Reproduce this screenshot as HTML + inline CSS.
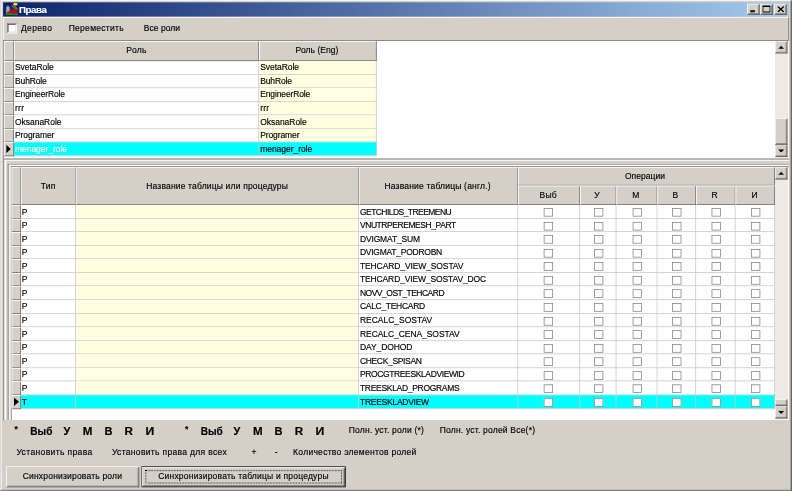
<!DOCTYPE html>
<html><head><meta charset="utf-8"><title>Права</title>
<style>
html,body{margin:0;padding:0;background:#d4d0c8;overflow:hidden;}
body{width:792px;height:491px;position:relative;}
#w{position:absolute;left:0;top:0;width:1024px;height:635px;transform-origin:0 0;transform:scale(0.773438);background:#d4d0c8;font-family:"Liberation Sans", sans-serif;font-size:11px;color:#000;overflow:hidden;filter:blur(0.35px);}
#w div,#w span{position:absolute;box-sizing:border-box;white-space:nowrap;}
.t{line-height:14px;height:14px;-webkit-text-stroke:0.2px currentColor;}
.hd{background:#d4d0c8;border-right:1px solid #6c6c6c;border-bottom:1px solid #6c6c6c;border-top:1px solid #fff;border-left:1px solid #fff;text-align:center;}
.cb{border:1px solid #848484;background:#fff;}
.sunk{border:1px solid;border-color:#808080 #fff #fff #808080;}
.sunk2{border:1px solid;border-color:#404040 #d4d0c8 #d4d0c8 #404040;}
.btn{background:#d4d0c8;border:1px solid;border-color:#fff #404040 #404040 #fff;}
.btn:after{content:"";position:absolute;left:0;top:0;right:0;bottom:0;border:1px solid;border-color:#d4d0c8 #808080 #808080 #d4d0c8;}
.sb{background:#eceae6;}
.hl{background:#c8c8c8;height:1px;}
.vl{background:#c8c8c8;width:1px;}
</style></head><body><div id="w">
<div class="" style="left:0px;top:0px;width:1024px;height:635px;border:1px solid;border-color:#d4d0c8 #404040 #404040 #d4d0c8;"></div>
<div class="" style="left:1px;top:0px;width:1022px;height:634px;border:1px solid;border-color:#fff #808080 #a09d98 #fff;"></div>
<div class="" style="left:4px;top:3px;width:1016px;height:18px;background:linear-gradient(to right,#0a246a 0%,#a6caf0 100%);"></div>
<div class="" style="left:4px;top:21px;width:1016px;height:1px;opacity:0.55;background:linear-gradient(to right,#0a246a 0%,#a6caf0 100%);"></div>
<svg style="position:absolute;left:7px;top:4px" width="16" height="16" viewBox="0 0 16 16"><rect x="0" y="0" width="16" height="16" fill="#0c2078"/><rect x="0" y="0" width="7" height="4" fill="#101850"/><path d="M1.8 3.6h2.6l1 2v7.6h-4.4v-7.6z" fill="#acacac"/><rect x="1.6" y="3" width="3" height="1.6" fill="#606060"/><ellipse cx="13" cy="1.4" rx="3" ry="1.6" fill="#f4f400"/><path d="M7 3l1.4 0 6.8 5.5h-2.2z" fill="#8c8c28"/><path d="M9.6 2.6l1.2 0 5 4.4v1.5z" fill="#a8a820"/><path d="M5.6 9l2-3 1 0-2 4z" fill="#2840b8"/><path d="M2.2 13.5v-2.2l3.4-0.7 2-1.2 1.6-1.6h1.2l0.8 0.8 0.8-0.8h1l0.8 0.8 0.8-0.8h1.4v5.7z" fill="#c40010"/><rect x="0" y="13.3" width="16" height="2.4" fill="#109410"/></svg>
<span class="t" style="left:24.5px;top:5.5px;color:#fff;letter-spacing:-0.493px;font-size:12.5px;font-weight:bold;">Права</span>
<div class="btn" style="left:966px;top:5px;width:16px;height:14px;"></div>
<div class="" style="left:970px;top:13px;width:6px;height:3px;background:#000;opacity:0.85;"></div>
<div class="btn" style="left:983px;top:5px;width:16px;height:14px;"></div>
<div class="" style="left:986px;top:7px;width:10px;height:9px;border:1px solid #000;border-top:2px solid #000;"></div>
<div class="btn" style="left:1001px;top:5px;width:16px;height:14px;"></div>
<svg style="position:absolute;left:1004.5px;top:7.5px" width="9" height="8" viewBox="0 0 9 8"><path d="M0.6 0.4L8.4 7.6M8.4 0.4L0.6 7.6" stroke="#000" stroke-width="1.7" fill="none"/></svg>
<div class="" style="left:4px;top:22px;width:1016px;height:30px;border:1px solid;border-color:#fff #808080 transparent #fff;"></div>
<div class="" style="left:9px;top:30px;width:13px;height:13px;border:1px solid;border-color:#808080 #fff #fff #808080;background:#fff;"></div>
<div class="" style="left:10px;top:31px;width:11px;height:11px;border:1px solid;border-color:#404040 #d4d0c8 #d4d0c8 #404040;"></div>
<span class="t" style="left:27px;top:29px;letter-spacing:0.488px;">Дерево</span>
<span class="t" style="left:88.8px;top:29px;letter-spacing:0.372px;">Переместить</span>
<span class="t" style="left:186px;top:29px;letter-spacing:0.015px;">Все роли</span>
<div class="" style="left:4px;top:52px;width:1016px;height:153px;background:#fff;border-top:1px solid #6c6c6c;border-left:1px solid #6c6c6c;"></div>
<div class="hd" style="left:5px;top:53px;width:13px;height:26px;"></div>
<div class="hd" style="left:18px;top:53px;width:317px;height:26px;"></div>
<span class="t" style="left:163.3px;top:58px;letter-spacing:0.412px;">Роль</span>
<div class="hd" style="left:335px;top:53px;width:152px;height:26px;"></div>
<span class="t" style="left:382.1px;top:58px;letter-spacing:0.070px;">Роль (Eng)</span>
<div class="hd" style="left:5px;top:79px;width:13px;height:17.5px;"></div>
<div class="" style="left:335px;top:79px;width:152px;height:16.5px;background:#ffffe1;"></div>
<div class="hl" style="left:18px;top:95.5px;width:469px;height:1px;"></div>
<div class="vl" style="left:334px;top:79px;width:1px;height:17.5px;"></div>
<div class="vl" style="left:486px;top:79px;width:1px;height:17.5px;"></div>
<span class="t" style="left:19.4px;top:80px;letter-spacing:-0.073px;">SvetaRole</span>
<span class="t" style="left:336.4px;top:80px;letter-spacing:-0.073px;">SvetaRole</span>
<div class="hd" style="left:5px;top:96.5px;width:13px;height:17.5px;"></div>
<div class="" style="left:335px;top:96.5px;width:152px;height:16.5px;background:#ffffe1;"></div>
<div class="hl" style="left:18px;top:113px;width:469px;height:1px;"></div>
<div class="vl" style="left:334px;top:96.5px;width:1px;height:17.5px;"></div>
<div class="vl" style="left:486px;top:96.5px;width:1px;height:17.5px;"></div>
<span class="t" style="left:19.4px;top:97.5px;letter-spacing:-0.180px;">BuhRole</span>
<span class="t" style="left:336.4px;top:97.5px;letter-spacing:-0.180px;">BuhRole</span>
<div class="hd" style="left:5px;top:114px;width:13px;height:17.5px;"></div>
<div class="" style="left:335px;top:114px;width:152px;height:16.5px;background:#ffffe1;"></div>
<div class="hl" style="left:18px;top:130.5px;width:469px;height:1px;"></div>
<div class="vl" style="left:334px;top:114px;width:1px;height:17.5px;"></div>
<div class="vl" style="left:486px;top:114px;width:1px;height:17.5px;"></div>
<span class="t" style="left:19.4px;top:115px;letter-spacing:-0.171px;">EngineerRole</span>
<span class="t" style="left:336.4px;top:115px;letter-spacing:-0.171px;">EngineerRole</span>
<div class="hd" style="left:5px;top:131.5px;width:13px;height:17.5px;"></div>
<div class="" style="left:335px;top:131.5px;width:152px;height:16.5px;background:#ffffe1;"></div>
<div class="hl" style="left:18px;top:148px;width:469px;height:1px;"></div>
<div class="vl" style="left:334px;top:131.5px;width:1px;height:17.5px;"></div>
<div class="vl" style="left:486px;top:131.5px;width:1px;height:17.5px;"></div>
<span class="t" style="left:19.4px;top:132.5px;letter-spacing:0.324px;">rrr</span>
<span class="t" style="left:336.4px;top:132.5px;letter-spacing:0.324px;">rrr</span>
<div class="hd" style="left:5px;top:149px;width:13px;height:17.5px;"></div>
<div class="" style="left:335px;top:149px;width:152px;height:16.5px;background:#ffffe1;"></div>
<div class="hl" style="left:18px;top:165.5px;width:469px;height:1px;"></div>
<div class="vl" style="left:334px;top:149px;width:1px;height:17.5px;"></div>
<div class="vl" style="left:486px;top:149px;width:1px;height:17.5px;"></div>
<span class="t" style="left:19.4px;top:150px;letter-spacing:-0.045px;">OksanaRole</span>
<span class="t" style="left:336.4px;top:150px;letter-spacing:-0.045px;">OksanaRole</span>
<div class="hd" style="left:5px;top:166.5px;width:13px;height:17.5px;"></div>
<div class="" style="left:335px;top:166.5px;width:152px;height:16.5px;background:#ffffe1;"></div>
<div class="hl" style="left:18px;top:183px;width:469px;height:1px;"></div>
<div class="vl" style="left:334px;top:166.5px;width:1px;height:17.5px;"></div>
<div class="vl" style="left:486px;top:166.5px;width:1px;height:17.5px;"></div>
<span class="t" style="left:19.4px;top:167.5px;letter-spacing:-0.127px;">Programer</span>
<span class="t" style="left:336.4px;top:167.5px;letter-spacing:-0.127px;">Programer</span>
<div class="hd" style="left:5px;top:184px;width:13px;height:17.5px;"></div>
<div class="" style="left:18px;top:184px;width:469px;height:16.5px;background:#00ffff;"></div>
<svg style="position:absolute;left:8px;top:187px" width="6" height="11" viewBox="0 0 6 11"><path d="M0 0l6 5.5-6 5.5z" fill="#000"/></svg>
<div class="hl" style="left:18px;top:200.5px;width:469px;height:1px;"></div>
<div class="vl" style="left:334px;top:184px;width:1px;height:17.5px;"></div>
<div class="vl" style="left:486px;top:184px;width:1px;height:17.5px;"></div>
<span class="t" style="left:19.4px;top:185px;color:#fff;letter-spacing:-0.058px;">menager_role</span>
<span class="t" style="left:336.4px;top:185px;letter-spacing:-0.058px;">menager_role</span>
<div class="sb" style="left:1002px;top:53px;width:17px;height:151px;"></div>
<div class="btn" style="left:1002px;top:53px;width:16px;height:16px;"></div>
<svg style="position:absolute;left:1005.5px;top:58.5px" width="8" height="4.5" viewBox="0 0 8 4.5"><path d="M0 4.5l4-4.5 4 4.5z" fill="#000"/></svg>
<div class="btn" style="left:1002px;top:187px;width:16px;height:16px;"></div>
<svg style="position:absolute;left:1005.5px;top:192.5px" width="8" height="4.5" viewBox="0 0 8 4.5"><path d="M0 0l4 4.5 4-4.5z" fill="#000"/></svg>
<div class="btn" style="left:1002px;top:153px;width:16px;height:34px;"></div>
<div class="" style="left:4px;top:205px;width:1016px;height:339px;border-top:1px solid #808080;border-left:1px solid #808080;"></div>
<div class="" style="left:6px;top:207px;width:1014px;height:336px;border-top:1px solid #fff;border-left:2px solid #fff;"></div>
<div class="" style="left:10px;top:212px;width:1010px;height:331px;border-top:1px solid #808080;border-left:1px solid #808080;"></div>
<div class="" style="left:12px;top:213px;width:1008px;height:330px;border-top:2px solid #fff;border-left:2px solid #fff;"></div>
<div class="" style="left:14px;top:215px;width:1006px;height:328px;background:#fff;border-top:1px solid #6c6c6c;border-left:1px solid #6c6c6c;"></div>
<div class="hd" style="left:15px;top:216px;width:12px;height:49px;"></div>
<div class="hd" style="left:27px;top:216px;width:71px;height:49px;"></div>
<div class="hd" style="left:98px;top:216px;width:366px;height:49px;"></div>
<div class="hd" style="left:464px;top:216px;width:206px;height:49px;"></div>
<div class="hd" style="left:670px;top:216px;width:332px;height:24px;"></div>
<span class="t" style="left:52.8px;top:233px;letter-spacing:0.140px;">Тип</span>
<span class="t" style="left:189px;top:233px;letter-spacing:0.224px;">Название таблицы или процедуры</span>
<span class="t" style="left:497.1px;top:233px;letter-spacing:0.241px;">Название таблицы (англ.)</span>
<span class="t" style="left:808px;top:221px;letter-spacing:0.037px;">Операции</span>
<div class="hd" style="left:670px;top:240px;width:80px;height:25px;"></div>
<span class="t" style="left:697.7px;top:245px;letter-spacing:0.218px;">Выб</span>
<div class="hd" style="left:750px;top:240px;width:47px;height:25px;"></div>
<span class="t" style="left:768.4px;top:245px;letter-spacing:-0.006px;">У</span>
<div class="hd" style="left:797px;top:240px;width:53px;height:25px;"></div>
<span class="t" style="left:817.4px;top:245px;letter-spacing:-0.112px;">М</span>
<div class="hd" style="left:850px;top:240px;width:50px;height:25px;"></div>
<span class="t" style="left:869.6px;top:245px;letter-spacing:-0.097px;">В</span>
<div class="hd" style="left:900px;top:240px;width:51px;height:25px;"></div>
<span class="t" style="left:920px;top:245px;letter-spacing:-0.186px;">R</span>
<div class="hd" style="left:951px;top:240px;width:51px;height:25px;"></div>
<span class="t" style="left:971.6px;top:245px;letter-spacing:-0.149px;">И</span>
<div class="hd" style="left:15px;top:265px;width:12px;height:17.57px;"></div>
<div class="" style="left:98px;top:265px;width:366px;height:16.57px;background:#ffffe1;"></div>
<div class="hl" style="left:27px;top:281.57px;width:975px;height:1px;"></div>
<div class="vl" style="left:97px;top:265px;width:1px;height:17.57px;"></div>
<div class="vl" style="left:463px;top:265px;width:1px;height:17.57px;"></div>
<div class="vl" style="left:669px;top:265px;width:1px;height:17.57px;"></div>
<div class="vl" style="left:749px;top:265px;width:1px;height:17.57px;"></div>
<div class="vl" style="left:796px;top:265px;width:1px;height:17.57px;"></div>
<div class="vl" style="left:849px;top:265px;width:1px;height:17.57px;"></div>
<div class="vl" style="left:899px;top:265px;width:1px;height:17.57px;"></div>
<div class="vl" style="left:950px;top:265px;width:1px;height:17.57px;"></div>
<div class="vl" style="left:1001px;top:265px;width:1px;height:17.57px;"></div>
<span class="t" style="left:28.2px;top:266.5px;">P</span>
<span class="t" style="left:465.4px;top:266.5px;letter-spacing:-0.720px;">GETCHILDS_TREEMENU</span>
<div class="cb" style="left:703px;top:269px;width:12px;height:11px;"></div>
<div class="cb" style="left:768px;top:269px;width:12px;height:11px;"></div>
<div class="cb" style="left:818px;top:269px;width:12px;height:11px;"></div>
<div class="cb" style="left:869px;top:269px;width:12px;height:11px;"></div>
<div class="cb" style="left:920px;top:269px;width:12px;height:11px;"></div>
<div class="cb" style="left:971px;top:269px;width:12px;height:11px;"></div>
<div class="hd" style="left:15px;top:282.57px;width:12px;height:17.57px;"></div>
<div class="" style="left:98px;top:282.57px;width:366px;height:16.57px;background:#ffffe1;"></div>
<div class="hl" style="left:27px;top:299.14px;width:975px;height:1px;"></div>
<div class="vl" style="left:97px;top:282.57px;width:1px;height:17.57px;"></div>
<div class="vl" style="left:463px;top:282.57px;width:1px;height:17.57px;"></div>
<div class="vl" style="left:669px;top:282.57px;width:1px;height:17.57px;"></div>
<div class="vl" style="left:749px;top:282.57px;width:1px;height:17.57px;"></div>
<div class="vl" style="left:796px;top:282.57px;width:1px;height:17.57px;"></div>
<div class="vl" style="left:849px;top:282.57px;width:1px;height:17.57px;"></div>
<div class="vl" style="left:899px;top:282.57px;width:1px;height:17.57px;"></div>
<div class="vl" style="left:950px;top:282.57px;width:1px;height:17.57px;"></div>
<div class="vl" style="left:1001px;top:282.57px;width:1px;height:17.57px;"></div>
<span class="t" style="left:28.2px;top:284.07px;">P</span>
<span class="t" style="left:465.4px;top:284.07px;letter-spacing:-0.570px;">VNUTRPEREMESH_PART</span>
<div class="cb" style="left:703px;top:286.57px;width:12px;height:11px;"></div>
<div class="cb" style="left:768px;top:286.57px;width:12px;height:11px;"></div>
<div class="cb" style="left:818px;top:286.57px;width:12px;height:11px;"></div>
<div class="cb" style="left:869px;top:286.57px;width:12px;height:11px;"></div>
<div class="cb" style="left:920px;top:286.57px;width:12px;height:11px;"></div>
<div class="cb" style="left:971px;top:286.57px;width:12px;height:11px;"></div>
<div class="hd" style="left:15px;top:300.14px;width:12px;height:17.57px;"></div>
<div class="" style="left:98px;top:300.14px;width:366px;height:16.57px;background:#ffffe1;"></div>
<div class="hl" style="left:27px;top:316.71px;width:975px;height:1px;"></div>
<div class="vl" style="left:97px;top:300.14px;width:1px;height:17.57px;"></div>
<div class="vl" style="left:463px;top:300.14px;width:1px;height:17.57px;"></div>
<div class="vl" style="left:669px;top:300.14px;width:1px;height:17.57px;"></div>
<div class="vl" style="left:749px;top:300.14px;width:1px;height:17.57px;"></div>
<div class="vl" style="left:796px;top:300.14px;width:1px;height:17.57px;"></div>
<div class="vl" style="left:849px;top:300.14px;width:1px;height:17.57px;"></div>
<div class="vl" style="left:899px;top:300.14px;width:1px;height:17.57px;"></div>
<div class="vl" style="left:950px;top:300.14px;width:1px;height:17.57px;"></div>
<div class="vl" style="left:1001px;top:300.14px;width:1px;height:17.57px;"></div>
<span class="t" style="left:28.2px;top:301.64px;">P</span>
<span class="t" style="left:465.4px;top:301.64px;letter-spacing:-0.215px;">DVIGMAT_SUM</span>
<div class="cb" style="left:703px;top:304.14px;width:12px;height:11px;"></div>
<div class="cb" style="left:768px;top:304.14px;width:12px;height:11px;"></div>
<div class="cb" style="left:818px;top:304.14px;width:12px;height:11px;"></div>
<div class="cb" style="left:869px;top:304.14px;width:12px;height:11px;"></div>
<div class="cb" style="left:920px;top:304.14px;width:12px;height:11px;"></div>
<div class="cb" style="left:971px;top:304.14px;width:12px;height:11px;"></div>
<div class="hd" style="left:15px;top:317.71px;width:12px;height:17.57px;"></div>
<div class="" style="left:98px;top:317.71px;width:366px;height:16.57px;background:#ffffe1;"></div>
<div class="hl" style="left:27px;top:334.28px;width:975px;height:1px;"></div>
<div class="vl" style="left:97px;top:317.71px;width:1px;height:17.57px;"></div>
<div class="vl" style="left:463px;top:317.71px;width:1px;height:17.57px;"></div>
<div class="vl" style="left:669px;top:317.71px;width:1px;height:17.57px;"></div>
<div class="vl" style="left:749px;top:317.71px;width:1px;height:17.57px;"></div>
<div class="vl" style="left:796px;top:317.71px;width:1px;height:17.57px;"></div>
<div class="vl" style="left:849px;top:317.71px;width:1px;height:17.57px;"></div>
<div class="vl" style="left:899px;top:317.71px;width:1px;height:17.57px;"></div>
<div class="vl" style="left:950px;top:317.71px;width:1px;height:17.57px;"></div>
<div class="vl" style="left:1001px;top:317.71px;width:1px;height:17.57px;"></div>
<span class="t" style="left:28.2px;top:319.21px;">P</span>
<span class="t" style="left:465.4px;top:319.21px;letter-spacing:-0.330px;">DVIGMAT_PODROBN</span>
<div class="cb" style="left:703px;top:321.71px;width:12px;height:11px;"></div>
<div class="cb" style="left:768px;top:321.71px;width:12px;height:11px;"></div>
<div class="cb" style="left:818px;top:321.71px;width:12px;height:11px;"></div>
<div class="cb" style="left:869px;top:321.71px;width:12px;height:11px;"></div>
<div class="cb" style="left:920px;top:321.71px;width:12px;height:11px;"></div>
<div class="cb" style="left:971px;top:321.71px;width:12px;height:11px;"></div>
<div class="hd" style="left:15px;top:335.28px;width:12px;height:17.57px;"></div>
<div class="" style="left:98px;top:335.28px;width:366px;height:16.57px;background:#ffffe1;"></div>
<div class="hl" style="left:27px;top:351.85px;width:975px;height:1px;"></div>
<div class="vl" style="left:97px;top:335.28px;width:1px;height:17.57px;"></div>
<div class="vl" style="left:463px;top:335.28px;width:1px;height:17.57px;"></div>
<div class="vl" style="left:669px;top:335.28px;width:1px;height:17.57px;"></div>
<div class="vl" style="left:749px;top:335.28px;width:1px;height:17.57px;"></div>
<div class="vl" style="left:796px;top:335.28px;width:1px;height:17.57px;"></div>
<div class="vl" style="left:849px;top:335.28px;width:1px;height:17.57px;"></div>
<div class="vl" style="left:899px;top:335.28px;width:1px;height:17.57px;"></div>
<div class="vl" style="left:950px;top:335.28px;width:1px;height:17.57px;"></div>
<div class="vl" style="left:1001px;top:335.28px;width:1px;height:17.57px;"></div>
<span class="t" style="left:28.2px;top:336.78px;">P</span>
<span class="t" style="left:465.4px;top:336.78px;letter-spacing:-0.150px;">TEHCARD_VIEW_SOSTAV</span>
<div class="cb" style="left:703px;top:339.28px;width:12px;height:11px;"></div>
<div class="cb" style="left:768px;top:339.28px;width:12px;height:11px;"></div>
<div class="cb" style="left:818px;top:339.28px;width:12px;height:11px;"></div>
<div class="cb" style="left:869px;top:339.28px;width:12px;height:11px;"></div>
<div class="cb" style="left:920px;top:339.28px;width:12px;height:11px;"></div>
<div class="cb" style="left:971px;top:339.28px;width:12px;height:11px;"></div>
<div class="hd" style="left:15px;top:352.85px;width:12px;height:17.57px;"></div>
<div class="" style="left:98px;top:352.85px;width:366px;height:16.57px;background:#ffffe1;"></div>
<div class="hl" style="left:27px;top:369.42px;width:975px;height:1px;"></div>
<div class="vl" style="left:97px;top:352.85px;width:1px;height:17.57px;"></div>
<div class="vl" style="left:463px;top:352.85px;width:1px;height:17.57px;"></div>
<div class="vl" style="left:669px;top:352.85px;width:1px;height:17.57px;"></div>
<div class="vl" style="left:749px;top:352.85px;width:1px;height:17.57px;"></div>
<div class="vl" style="left:796px;top:352.85px;width:1px;height:17.57px;"></div>
<div class="vl" style="left:849px;top:352.85px;width:1px;height:17.57px;"></div>
<div class="vl" style="left:899px;top:352.85px;width:1px;height:17.57px;"></div>
<div class="vl" style="left:950px;top:352.85px;width:1px;height:17.57px;"></div>
<div class="vl" style="left:1001px;top:352.85px;width:1px;height:17.57px;"></div>
<span class="t" style="left:28.2px;top:354.35px;">P</span>
<span class="t" style="left:465.4px;top:354.35px;letter-spacing:-0.172px;">TEHCARD_VIEW_SOSTAV_DOC</span>
<div class="cb" style="left:703px;top:356.85px;width:12px;height:11px;"></div>
<div class="cb" style="left:768px;top:356.85px;width:12px;height:11px;"></div>
<div class="cb" style="left:818px;top:356.85px;width:12px;height:11px;"></div>
<div class="cb" style="left:869px;top:356.85px;width:12px;height:11px;"></div>
<div class="cb" style="left:920px;top:356.85px;width:12px;height:11px;"></div>
<div class="cb" style="left:971px;top:356.85px;width:12px;height:11px;"></div>
<div class="hd" style="left:15px;top:370.42px;width:12px;height:17.57px;"></div>
<div class="" style="left:98px;top:370.42px;width:366px;height:16.57px;background:#ffffe1;"></div>
<div class="hl" style="left:27px;top:386.99px;width:975px;height:1px;"></div>
<div class="vl" style="left:97px;top:370.42px;width:1px;height:17.57px;"></div>
<div class="vl" style="left:463px;top:370.42px;width:1px;height:17.57px;"></div>
<div class="vl" style="left:669px;top:370.42px;width:1px;height:17.57px;"></div>
<div class="vl" style="left:749px;top:370.42px;width:1px;height:17.57px;"></div>
<div class="vl" style="left:796px;top:370.42px;width:1px;height:17.57px;"></div>
<div class="vl" style="left:849px;top:370.42px;width:1px;height:17.57px;"></div>
<div class="vl" style="left:899px;top:370.42px;width:1px;height:17.57px;"></div>
<div class="vl" style="left:950px;top:370.42px;width:1px;height:17.57px;"></div>
<div class="vl" style="left:1001px;top:370.42px;width:1px;height:17.57px;"></div>
<span class="t" style="left:28.2px;top:371.92px;">P</span>
<span class="t" style="left:465.4px;top:371.92px;letter-spacing:-0.654px;">NOVV_OST_TEHCARD</span>
<div class="cb" style="left:703px;top:374.42px;width:12px;height:11px;"></div>
<div class="cb" style="left:768px;top:374.42px;width:12px;height:11px;"></div>
<div class="cb" style="left:818px;top:374.42px;width:12px;height:11px;"></div>
<div class="cb" style="left:869px;top:374.42px;width:12px;height:11px;"></div>
<div class="cb" style="left:920px;top:374.42px;width:12px;height:11px;"></div>
<div class="cb" style="left:971px;top:374.42px;width:12px;height:11px;"></div>
<div class="hd" style="left:15px;top:387.99px;width:12px;height:17.57px;"></div>
<div class="" style="left:98px;top:387.99px;width:366px;height:16.57px;background:#ffffe1;"></div>
<div class="hl" style="left:27px;top:404.56px;width:975px;height:1px;"></div>
<div class="vl" style="left:97px;top:387.99px;width:1px;height:17.57px;"></div>
<div class="vl" style="left:463px;top:387.99px;width:1px;height:17.57px;"></div>
<div class="vl" style="left:669px;top:387.99px;width:1px;height:17.57px;"></div>
<div class="vl" style="left:749px;top:387.99px;width:1px;height:17.57px;"></div>
<div class="vl" style="left:796px;top:387.99px;width:1px;height:17.57px;"></div>
<div class="vl" style="left:849px;top:387.99px;width:1px;height:17.57px;"></div>
<div class="vl" style="left:899px;top:387.99px;width:1px;height:17.57px;"></div>
<div class="vl" style="left:950px;top:387.99px;width:1px;height:17.57px;"></div>
<div class="vl" style="left:1001px;top:387.99px;width:1px;height:17.57px;"></div>
<span class="t" style="left:28.2px;top:389.49px;">P</span>
<span class="t" style="left:465.4px;top:389.49px;letter-spacing:-0.394px;">CALC_TEHCARD</span>
<div class="cb" style="left:703px;top:391.99px;width:12px;height:11px;"></div>
<div class="cb" style="left:768px;top:391.99px;width:12px;height:11px;"></div>
<div class="cb" style="left:818px;top:391.99px;width:12px;height:11px;"></div>
<div class="cb" style="left:869px;top:391.99px;width:12px;height:11px;"></div>
<div class="cb" style="left:920px;top:391.99px;width:12px;height:11px;"></div>
<div class="cb" style="left:971px;top:391.99px;width:12px;height:11px;"></div>
<div class="hd" style="left:15px;top:405.56px;width:12px;height:17.57px;"></div>
<div class="" style="left:98px;top:405.56px;width:366px;height:16.57px;background:#ffffe1;"></div>
<div class="hl" style="left:27px;top:422.13px;width:975px;height:1px;"></div>
<div class="vl" style="left:97px;top:405.56px;width:1px;height:17.57px;"></div>
<div class="vl" style="left:463px;top:405.56px;width:1px;height:17.57px;"></div>
<div class="vl" style="left:669px;top:405.56px;width:1px;height:17.57px;"></div>
<div class="vl" style="left:749px;top:405.56px;width:1px;height:17.57px;"></div>
<div class="vl" style="left:796px;top:405.56px;width:1px;height:17.57px;"></div>
<div class="vl" style="left:849px;top:405.56px;width:1px;height:17.57px;"></div>
<div class="vl" style="left:899px;top:405.56px;width:1px;height:17.57px;"></div>
<div class="vl" style="left:950px;top:405.56px;width:1px;height:17.57px;"></div>
<div class="vl" style="left:1001px;top:405.56px;width:1px;height:17.57px;"></div>
<span class="t" style="left:28.2px;top:407.06px;">P</span>
<span class="t" style="left:465.4px;top:407.06px;letter-spacing:-0.032px;">RECALC_SOSTAV</span>
<div class="cb" style="left:703px;top:409.56px;width:12px;height:11px;"></div>
<div class="cb" style="left:768px;top:409.56px;width:12px;height:11px;"></div>
<div class="cb" style="left:818px;top:409.56px;width:12px;height:11px;"></div>
<div class="cb" style="left:869px;top:409.56px;width:12px;height:11px;"></div>
<div class="cb" style="left:920px;top:409.56px;width:12px;height:11px;"></div>
<div class="cb" style="left:971px;top:409.56px;width:12px;height:11px;"></div>
<div class="hd" style="left:15px;top:423.13px;width:12px;height:17.57px;"></div>
<div class="" style="left:98px;top:423.13px;width:366px;height:16.57px;background:#ffffe1;"></div>
<div class="hl" style="left:27px;top:439.7px;width:975px;height:1px;"></div>
<div class="vl" style="left:97px;top:423.13px;width:1px;height:17.57px;"></div>
<div class="vl" style="left:463px;top:423.13px;width:1px;height:17.57px;"></div>
<div class="vl" style="left:669px;top:423.13px;width:1px;height:17.57px;"></div>
<div class="vl" style="left:749px;top:423.13px;width:1px;height:17.57px;"></div>
<div class="vl" style="left:796px;top:423.13px;width:1px;height:17.57px;"></div>
<div class="vl" style="left:849px;top:423.13px;width:1px;height:17.57px;"></div>
<div class="vl" style="left:899px;top:423.13px;width:1px;height:17.57px;"></div>
<div class="vl" style="left:950px;top:423.13px;width:1px;height:17.57px;"></div>
<div class="vl" style="left:1001px;top:423.13px;width:1px;height:17.57px;"></div>
<span class="t" style="left:28.2px;top:424.63px;">P</span>
<span class="t" style="left:465.4px;top:424.63px;letter-spacing:-0.089px;">RECALC_CENA_SOSTAV</span>
<div class="cb" style="left:703px;top:427.13px;width:12px;height:11px;"></div>
<div class="cb" style="left:768px;top:427.13px;width:12px;height:11px;"></div>
<div class="cb" style="left:818px;top:427.13px;width:12px;height:11px;"></div>
<div class="cb" style="left:869px;top:427.13px;width:12px;height:11px;"></div>
<div class="cb" style="left:920px;top:427.13px;width:12px;height:11px;"></div>
<div class="cb" style="left:971px;top:427.13px;width:12px;height:11px;"></div>
<div class="hd" style="left:15px;top:440.7px;width:12px;height:17.57px;"></div>
<div class="" style="left:98px;top:440.7px;width:366px;height:16.57px;background:#ffffe1;"></div>
<div class="hl" style="left:27px;top:457.27px;width:975px;height:1px;"></div>
<div class="vl" style="left:97px;top:440.7px;width:1px;height:17.57px;"></div>
<div class="vl" style="left:463px;top:440.7px;width:1px;height:17.57px;"></div>
<div class="vl" style="left:669px;top:440.7px;width:1px;height:17.57px;"></div>
<div class="vl" style="left:749px;top:440.7px;width:1px;height:17.57px;"></div>
<div class="vl" style="left:796px;top:440.7px;width:1px;height:17.57px;"></div>
<div class="vl" style="left:849px;top:440.7px;width:1px;height:17.57px;"></div>
<div class="vl" style="left:899px;top:440.7px;width:1px;height:17.57px;"></div>
<div class="vl" style="left:950px;top:440.7px;width:1px;height:17.57px;"></div>
<div class="vl" style="left:1001px;top:440.7px;width:1px;height:17.57px;"></div>
<span class="t" style="left:28.2px;top:442.2px;">P</span>
<span class="t" style="left:465.4px;top:442.2px;letter-spacing:-0.123px;">DAY_DOHOD</span>
<div class="cb" style="left:703px;top:444.7px;width:12px;height:11px;"></div>
<div class="cb" style="left:768px;top:444.7px;width:12px;height:11px;"></div>
<div class="cb" style="left:818px;top:444.7px;width:12px;height:11px;"></div>
<div class="cb" style="left:869px;top:444.7px;width:12px;height:11px;"></div>
<div class="cb" style="left:920px;top:444.7px;width:12px;height:11px;"></div>
<div class="cb" style="left:971px;top:444.7px;width:12px;height:11px;"></div>
<div class="hd" style="left:15px;top:458.27px;width:12px;height:17.57px;"></div>
<div class="" style="left:98px;top:458.27px;width:366px;height:16.57px;background:#ffffe1;"></div>
<div class="hl" style="left:27px;top:474.84px;width:975px;height:1px;"></div>
<div class="vl" style="left:97px;top:458.27px;width:1px;height:17.57px;"></div>
<div class="vl" style="left:463px;top:458.27px;width:1px;height:17.57px;"></div>
<div class="vl" style="left:669px;top:458.27px;width:1px;height:17.57px;"></div>
<div class="vl" style="left:749px;top:458.27px;width:1px;height:17.57px;"></div>
<div class="vl" style="left:796px;top:458.27px;width:1px;height:17.57px;"></div>
<div class="vl" style="left:849px;top:458.27px;width:1px;height:17.57px;"></div>
<div class="vl" style="left:899px;top:458.27px;width:1px;height:17.57px;"></div>
<div class="vl" style="left:950px;top:458.27px;width:1px;height:17.57px;"></div>
<div class="vl" style="left:1001px;top:458.27px;width:1px;height:17.57px;"></div>
<span class="t" style="left:28.2px;top:459.77px;">P</span>
<span class="t" style="left:465.4px;top:459.77px;letter-spacing:-0.449px;">CHECK_SPISAN</span>
<div class="cb" style="left:703px;top:462.27px;width:12px;height:11px;"></div>
<div class="cb" style="left:768px;top:462.27px;width:12px;height:11px;"></div>
<div class="cb" style="left:818px;top:462.27px;width:12px;height:11px;"></div>
<div class="cb" style="left:869px;top:462.27px;width:12px;height:11px;"></div>
<div class="cb" style="left:920px;top:462.27px;width:12px;height:11px;"></div>
<div class="cb" style="left:971px;top:462.27px;width:12px;height:11px;"></div>
<div class="hd" style="left:15px;top:475.84px;width:12px;height:17.57px;"></div>
<div class="" style="left:98px;top:475.84px;width:366px;height:16.57px;background:#ffffe1;"></div>
<div class="hl" style="left:27px;top:492.41px;width:975px;height:1px;"></div>
<div class="vl" style="left:97px;top:475.84px;width:1px;height:17.57px;"></div>
<div class="vl" style="left:463px;top:475.84px;width:1px;height:17.57px;"></div>
<div class="vl" style="left:669px;top:475.84px;width:1px;height:17.57px;"></div>
<div class="vl" style="left:749px;top:475.84px;width:1px;height:17.57px;"></div>
<div class="vl" style="left:796px;top:475.84px;width:1px;height:17.57px;"></div>
<div class="vl" style="left:849px;top:475.84px;width:1px;height:17.57px;"></div>
<div class="vl" style="left:899px;top:475.84px;width:1px;height:17.57px;"></div>
<div class="vl" style="left:950px;top:475.84px;width:1px;height:17.57px;"></div>
<div class="vl" style="left:1001px;top:475.84px;width:1px;height:17.57px;"></div>
<span class="t" style="left:28.2px;top:477.34px;">P</span>
<span class="t" style="left:465.4px;top:477.34px;letter-spacing:-0.493px;">PROCGTREESKLADVIEWID</span>
<div class="cb" style="left:703px;top:479.84px;width:12px;height:11px;"></div>
<div class="cb" style="left:768px;top:479.84px;width:12px;height:11px;"></div>
<div class="cb" style="left:818px;top:479.84px;width:12px;height:11px;"></div>
<div class="cb" style="left:869px;top:479.84px;width:12px;height:11px;"></div>
<div class="cb" style="left:920px;top:479.84px;width:12px;height:11px;"></div>
<div class="cb" style="left:971px;top:479.84px;width:12px;height:11px;"></div>
<div class="hd" style="left:15px;top:493.41px;width:12px;height:17.57px;"></div>
<div class="" style="left:98px;top:493.41px;width:366px;height:16.57px;background:#ffffe1;"></div>
<div class="hl" style="left:27px;top:509.98px;width:975px;height:1px;"></div>
<div class="vl" style="left:97px;top:493.41px;width:1px;height:17.57px;"></div>
<div class="vl" style="left:463px;top:493.41px;width:1px;height:17.57px;"></div>
<div class="vl" style="left:669px;top:493.41px;width:1px;height:17.57px;"></div>
<div class="vl" style="left:749px;top:493.41px;width:1px;height:17.57px;"></div>
<div class="vl" style="left:796px;top:493.41px;width:1px;height:17.57px;"></div>
<div class="vl" style="left:849px;top:493.41px;width:1px;height:17.57px;"></div>
<div class="vl" style="left:899px;top:493.41px;width:1px;height:17.57px;"></div>
<div class="vl" style="left:950px;top:493.41px;width:1px;height:17.57px;"></div>
<div class="vl" style="left:1001px;top:493.41px;width:1px;height:17.57px;"></div>
<span class="t" style="left:28.2px;top:494.91px;">P</span>
<span class="t" style="left:465.4px;top:494.91px;letter-spacing:-0.400px;">TREESKLAD_PROGRAMS</span>
<div class="cb" style="left:703px;top:497.41px;width:12px;height:11px;"></div>
<div class="cb" style="left:768px;top:497.41px;width:12px;height:11px;"></div>
<div class="cb" style="left:818px;top:497.41px;width:12px;height:11px;"></div>
<div class="cb" style="left:869px;top:497.41px;width:12px;height:11px;"></div>
<div class="cb" style="left:920px;top:497.41px;width:12px;height:11px;"></div>
<div class="cb" style="left:971px;top:497.41px;width:12px;height:11px;"></div>
<div class="hd" style="left:15px;top:510.98px;width:12px;height:17.57px;"></div>
<div class="" style="left:27px;top:510.98px;width:975px;height:16.57px;background:#00ffff;"></div>
<svg style="position:absolute;left:18px;top:513.98px" width="6.5" height="11" viewBox="0 0 6.5 11"><path d="M0 0l6.5 5.5-6.5 5.5z" fill="#000"/></svg>
<div class="hl" style="left:27px;top:527.55px;width:975px;height:1px;"></div>
<div class="vl" style="left:97px;top:510.98px;width:1px;height:17.57px;"></div>
<div class="vl" style="left:463px;top:510.98px;width:1px;height:17.57px;"></div>
<div class="vl" style="left:669px;top:510.98px;width:1px;height:17.57px;"></div>
<div class="vl" style="left:749px;top:510.98px;width:1px;height:17.57px;"></div>
<div class="vl" style="left:796px;top:510.98px;width:1px;height:17.57px;"></div>
<div class="vl" style="left:849px;top:510.98px;width:1px;height:17.57px;"></div>
<div class="vl" style="left:899px;top:510.98px;width:1px;height:17.57px;"></div>
<div class="vl" style="left:950px;top:510.98px;width:1px;height:17.57px;"></div>
<div class="vl" style="left:1001px;top:510.98px;width:1px;height:17.57px;"></div>
<span class="t" style="left:28.2px;top:512.48px;">T</span>
<span class="t" style="left:465.4px;top:512.48px;letter-spacing:-0.338px;">TREESKLADVIEW</span>
<div class="cb" style="left:703px;top:514.98px;width:12px;height:11px;"></div>
<div class="cb" style="left:768px;top:514.98px;width:12px;height:11px;"></div>
<div class="cb" style="left:818px;top:514.98px;width:12px;height:11px;"></div>
<div class="cb" style="left:869px;top:514.98px;width:12px;height:11px;"></div>
<div class="cb" style="left:920px;top:514.98px;width:12px;height:11px;"></div>
<div class="cb" style="left:971px;top:514.98px;width:12px;height:11px;"></div>
<div class="sb" style="left:1002px;top:216px;width:17px;height:326px;"></div>
<div class="btn" style="left:1002px;top:216px;width:16px;height:16px;"></div>
<svg style="position:absolute;left:1005.5px;top:221.5px" width="8" height="4.5" viewBox="0 0 8 4.5"><path d="M0 4.5l4-4.5 4 4.5z" fill="#000"/></svg>
<div class="btn" style="left:1002px;top:525px;width:16px;height:16px;"></div>
<svg style="position:absolute;left:1005.5px;top:530.5px" width="8" height="4.5" viewBox="0 0 8 4.5"><path d="M0 0l4 4.5 4-4.5z" fill="#000"/></svg>
<div class="btn" style="left:1002px;top:516px;width:16px;height:9px;"></div>
<span class="t" style="left:18.8768px;top:547px;font-weight:bold;">*</span>
<span class="t" style="left:39.1758px;top:551px;letter-spacing:0.027px;font-size:13px;font-weight:bold;">Выб</span>
<span class="t" style="left:81.5838px;top:551px;transform:scaleX(1.08);transform-origin:0 50%;font-size:13px;font-weight:bold;">У</span>
<span class="t" style="left:106.925px;top:551px;transform:scaleX(1.15);transform-origin:0 50%;font-size:13px;font-weight:bold;">М</span>
<span class="t" style="left:134.723px;top:551px;transform:scaleX(1.1);transform-origin:0 50%;font-size:13px;font-weight:bold;">В</span>
<span class="t" style="left:160.97px;top:551px;transform:scaleX(1.16);transform-origin:0 50%;font-size:13px;font-weight:bold;">R</span>
<span class="t" style="left:187.733px;top:551px;transform:scaleX(1.22);transform-origin:0 50%;font-size:13px;font-weight:bold;">И</span>
<span class="t" style="left:239.192px;top:547px;font-weight:bold;">*</span>
<span class="t" style="left:259.491px;top:551px;letter-spacing:0.027px;font-size:13px;font-weight:bold;">Выб</span>
<span class="t" style="left:301.899px;top:551px;transform:scaleX(1.08);transform-origin:0 50%;font-size:13px;font-weight:bold;">У</span>
<span class="t" style="left:327.24px;top:551px;transform:scaleX(1.15);transform-origin:0 50%;font-size:13px;font-weight:bold;">М</span>
<span class="t" style="left:355.038px;top:551px;transform:scaleX(1.1);transform-origin:0 50%;font-size:13px;font-weight:bold;">В</span>
<span class="t" style="left:381.285px;top:551px;transform:scaleX(1.16);transform-origin:0 50%;font-size:13px;font-weight:bold;">R</span>
<span class="t" style="left:408.048px;top:551px;transform:scaleX(1.22);transform-origin:0 50%;font-size:13px;font-weight:bold;">И</span>
<span class="t" style="left:450.974px;top:549px;letter-spacing:0.253px;">Полн. уст. роли (*)</span>
<span class="t" style="left:568.501px;top:549px;letter-spacing:0.260px;">Полн. уст. ролей Все(*)</span>
<span class="t" style="left:21.204px;top:577px;letter-spacing:0.479px;">Установить права</span>
<span class="t" style="left:144.679px;top:577px;letter-spacing:0.421px;">Установить права для всех</span>
<span class="t" style="left:325.2px;top:577px;">+</span>
<span class="t" style="left:355.3px;top:577px;">-</span>
<span class="t" style="left:378.958px;top:577px;letter-spacing:0.356px;">Количество элементов ролей</span>
<div class="btn" style="left:8px;top:603px;width:172px;height:27px;"></div>
<span class="t" style="left:29.3495px;top:608px;letter-spacing:0.243px;">Синхронизировать роли</span>
<div class="" style="left:183px;top:603px;width:264px;height:27px;background:#000;"></div>
<div class="btn" style="left:184px;top:604px;width:262px;height:25px;"></div>
<span class="t" style="left:204.541px;top:608px;letter-spacing:0.266px;">Синхронизировать таблицы и процедуры</span>
<div class="" style="left:188px;top:608px;width:254px;height:17px;border:1px dotted #000;"></div>
</div></body></html>
